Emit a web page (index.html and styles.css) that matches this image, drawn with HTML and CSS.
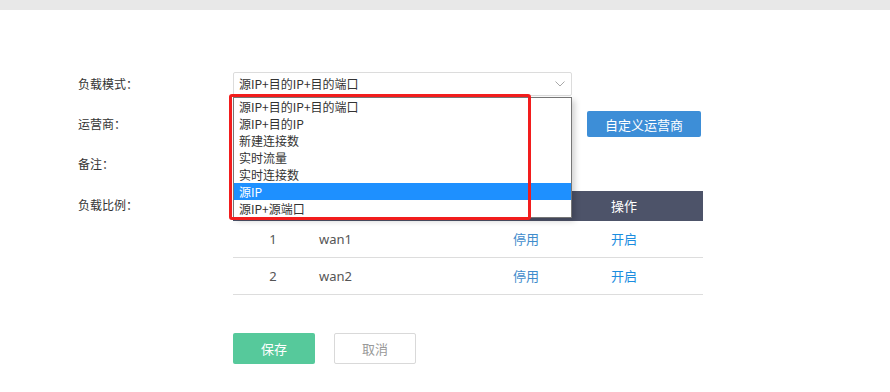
FILE: index.html
```
<!DOCTYPE html>
<html>
<head>
<meta charset="utf-8">
<link rel="stylesheet" href="styles.css">
</head>
<body>
<div class="topbar"></div>
<div class="page">
  <div class="form">
    <div class="row r1">
      <div class="label">负载模式：</div>
      <div class="select">
        <span>源IP+目的IP+目的端口</span>
        <svg class="chev" width="10" height="6" viewBox="0 0 10 6"><path d="M0.5 0.5 L5 5 L9.5 0.5" fill="none" stroke="#a8a8a8" stroke-width="1"/></svg>
      </div>
    </div>
    <div class="row r2">
      <div class="label">运营商：</div>
      <div class="field"></div>
      <button class="btn-blue">自定义运营商</button>
    </div>
    <div class="row r3">
      <div class="label">备注：</div>
      <div class="field"></div>
    </div>
    <div class="row r4">
      <div class="label">负载比例：</div>
      <div class="table">
        <div class="thead">
          <div class="c1"></div><div class="c2"></div><div class="c3"></div><div class="c4">操作</div>
        </div>
        <div class="trow">
          <div class="c1">1</div><div class="c2">wan1</div><div class="c3 stop">停用</div><div class="c4 on">开启</div>
        </div>
        <div class="trow">
          <div class="c1">2</div><div class="c2">wan2</div><div class="c3 stop">停用</div><div class="c4 on">开启</div>
        </div>
      </div>
    </div>
    <div class="actions">
      <button class="btn-save">保存</button>
      <button class="btn-cancel">取消</button>
    </div>
  </div>
  <ul class="dropdown">
    <li>源IP+目的IP+目的端口</li>
    <li>源IP+目的IP</li>
    <li>新建连接数</li>
    <li>实时流量</li>
    <li>实时连接数</li>
    <li class="sel">源IP</li>
    <li>源IP+源端口</li>
  </ul>
  <div class="redbox"></div>
</div>
</body>
</html>
```

FILE: styles.css
```
* { box-sizing: border-box; }
html, body { margin: 0; padding: 0; background: #fff; }
body {
  font-family: "Noto Sans CJK SC", "Noto Sans", sans-serif;
  font-size: 12px;
  color: #333;
  width: 890px;
  height: 392px;
  overflow: hidden;
}
.topbar { height: 10px; background: #e8e8e8; }
.page { position: relative; }
.form { padding: 62px 0 0 78px; }
.row { display: flex; align-items: flex-start; }
.label { width: 155px; color: #333; font-size: 12px; line-height: 24px; }
.r1 { height: 39px; }
.select {
  width: 339px; height: 24px;
  border: 1px solid #dcdcdc; border-radius: 2px;
  display: flex; align-items: center; justify-content: space-between;
  padding: 0 6px 0 5px;
  line-height: 22px; color: #333;
}
.r2 { height: 26px; margin-bottom: 14px; }
.r2 .label { line-height: 26px; }
.field { width: 339px; height: 26px; }
.btn-blue {
  margin-left: 15px; width: 114px; height: 26px;
  background: #3d8ed7; color: #fff; border: none; border-radius: 2px;
  font-family: inherit; font-size: 13px; padding: 0;
}
.r3 { height: 26px; margin-bottom: 14px; }
.r3 .label { line-height: 26px; }
.r4 .label { line-height: 28px; }
.r4 { height: 142px; }
.table { width: 470px; }
.thead, .trow { display: grid; grid-template-columns: 80px 194px 98px 98px; }
.thead { height: 30px; background: #4d5369; color: #fff; font-size: 13px; line-height: 30px; }
.trow { height: 37px; line-height: 36px; border-bottom: 1px solid #dddddd; color: #555; font-size: 13px; font-family: "Noto Sans", "Noto Sans CJK SC", sans-serif; }
.trow .c3, .trow .c4 { font-family: "Noto Sans CJK SC", sans-serif; }
.c1 { text-align: center; }
.c2 { padding-left: 6px; }
.c3 { padding-left: 6px; }
.c4 { padding-left: 6px; }
.stop { color: #3f8ccc; }
.on { color: #1b8ddf; }
.actions { display: flex; gap: 19px; padding-left: 155px; }
.btn-save {
  width: 82px; height: 31px; border: none; border-radius: 2px;
  background: #56c99b; color: #fff; font-family: inherit; font-size: 13px; padding: 0;
}
.btn-cancel {
  width: 82px; height: 31px; border: 1px solid #d9d9d9; border-radius: 2px;
  background: #fff; color: #999; font-family: inherit; font-size: 13px; padding: 0;
}
.dropdown {
  position: absolute; left: 233px; top: 87px; width: 339px;
  margin: 0; padding: 0; list-style: none;
  background: #fff; border: 1px solid #767676;
  box-shadow: 3px 3px 6px rgba(0,0,0,0.18);
}
.dropdown li { height: 17px; line-height: 17px; padding-left: 5px; color: #333; font-size: 12px; }
.dropdown li.sel { background: #1e90ff; color: #fff; }
.redbox {
  position: absolute; left: 229px; top: 84px; width: 302px; height: 126px;
  border: 3px solid #f21d1d; border-radius: 3px;
}
```
